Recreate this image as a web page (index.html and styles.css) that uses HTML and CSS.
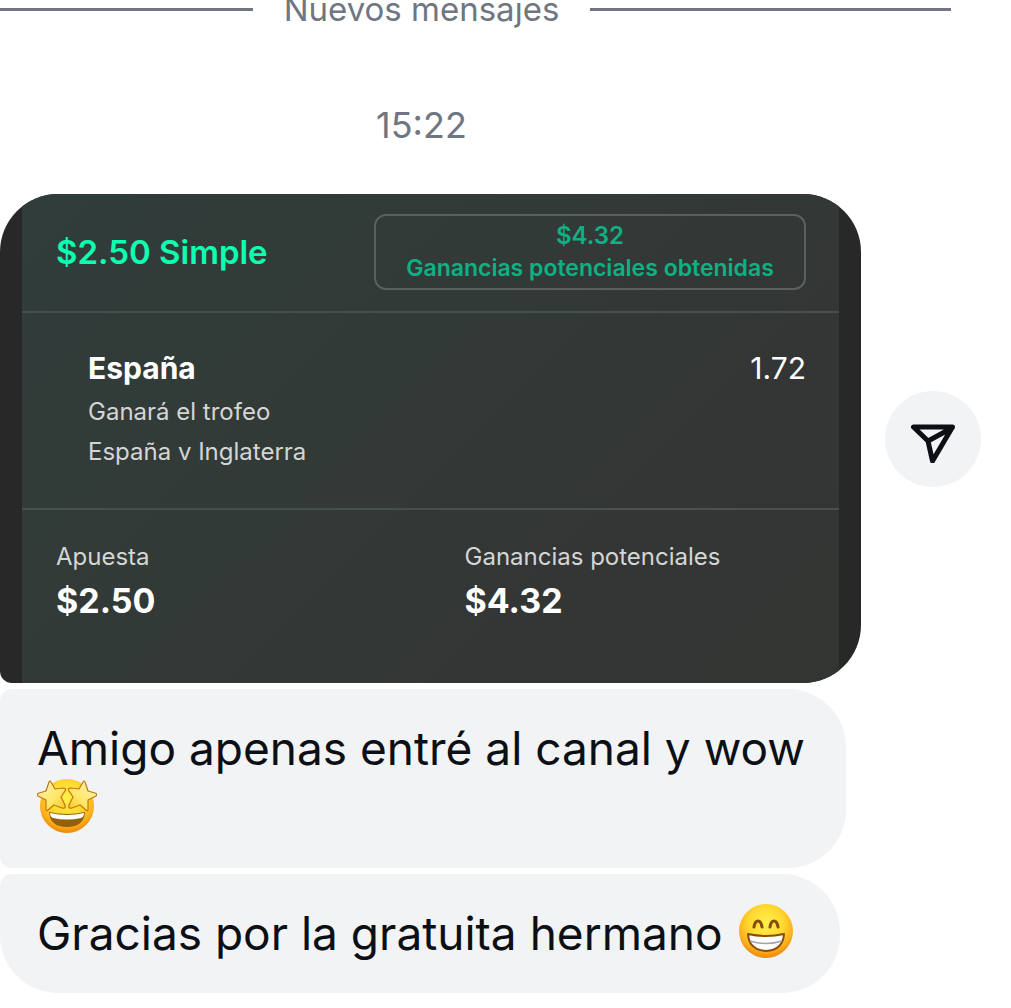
FILE: index.html
```html
<!DOCTYPE html>
<html lang="es">
<head>
  <meta charset="UTF-8">
  <meta name="viewport" content="width=device-width, initial-scale=1">
  <title>Mensajes</title>
  <link rel="stylesheet" href="styles.css">
</head>
<body>

  <main class="thread">
    <div class="divider"><span>Nuevos mensajes</span></div>
    <time class="time" datetime="15:22">15:22</time>

    <div class="message-row">
      <article class="photo">
        <div class="slip">
          <header class="slip-head">
            <h2>$2.50 Simple</h2>
            <div class="payout">
              <span class="payout-amount">$4.32</span>
              <span>Ganancias potenciales obtenidas</span>
            </div>
          </header>
          <section class="pick">
            <div>
              <h3>España</h3>
              <p>Ganará el trofeo</p>
              <p>España v Inglaterra</p>
            </div>
            <span class="odds">1.72</span>
          </section>
          <dl class="totals">
            <div>
              <dt>Apuesta</dt>
              <dd>$2.50</dd>
            </div>
            <div>
              <dt>Ganancias potenciales</dt>
              <dd>$4.32</dd>
            </div>
          </dl>
        </div>
      </article>
      <button class="share" type="button" aria-label="Compartir">
        <svg width="48" height="48" viewBox="0 0 48 48" fill="none" stroke="#0c1014" stroke-width="5" stroke-linejoin="round" stroke-linecap="round">
          <path d="M4.500 12H43.500L23.500 46L19 26ZM19 26L43 13"/>
        </svg>
      </button>
    </div>

    <p class="bubble">Amigo apenas entré al canal y wow
      <svg class="emoji" viewBox="0 0 60 60" role="img" aria-label="Ojos de estrella">
        <defs>
          <radialGradient id="face" cx="50%" cy="36%" r="64%">
            <stop offset="0" stop-color="#fff04c"/>
            <stop offset="0.500" stop-color="#ffd930"/>
            <stop offset="0.800" stop-color="#fcb01c"/>
            <stop offset="1" stop-color="#ea8609"/>
          </radialGradient>
          <linearGradient id="star" x1="0" y1="0" x2="1" y2="1">
            <stop offset="0" stop-color="#fff6bc"/>
            <stop offset="0.600" stop-color="#ffe768"/>
            <stop offset="1" stop-color="#f9c322"/>
          </linearGradient>
        </defs>
        <circle cx="30" cy="30" r="27" fill="url(#face)"/>
        <path d="M12 36Q30 40 48 36Q47 51 30 51Q13 51 12 36Z" fill="#94600a"/>
        <path d="M13 37Q30 41 47 37Q47 41 44 42Q30 45 16 42Q13 41 13 37Z" fill="#fff"/>
        <path id="eye" d="M12 6Q13 4 14 6L18 13L26 12Q30 12 28 15L24 21L28 29Q29 33 25 32L17 29L11 34Q9 36 9 33L9 24L1 20Q-1 18 2 17L9 15Z" fill="url(#star)" stroke="#c27810" stroke-width="1.200" stroke-linejoin="round"/>
        <use href="#eye" transform="matrix(-1 0 0 1 60 0)"/>
      </svg>
    </p>
    <p class="bubble bubble-last">Gracias por la gratuita hermano
      <svg class="emoji" viewBox="0 0 60 60" role="img" aria-label="Cara sonriente">
        <circle cx="30" cy="30" r="27" fill="url(#face)"/>
        <path d="M18 26Q19 20 22 20Q25 20 26 26M34 26Q35 20 38 20Q41 20 42 26" fill="none" stroke="#8a4b08" stroke-width="3" stroke-linecap="round"/>
        <path d="M12 33Q30 37 48 33Q47 49 30 50Q13 49 12 33Z" fill="#fff" stroke="#8a4b08" stroke-width="2" stroke-linejoin="round"/>
        <path d="M14 40Q30 45 46 40" fill="none" stroke="#a5a3a5" stroke-width="1.500"/>
      </svg>
    </p>
  </main>

</body>
</html>
```

FILE: styles.css
```css
* { box-sizing: border-box; }
body { margin: 0; background: #fff; color: #0c1014; font-family: Inter, "Liberation Sans", sans-serif; }
h2, h3, p, dl, dd { margin: 0; }

.thread { padding-right: 30px; overflow: hidden; }

/* the divider and time are centred on the full chat column, which runs off to the left */
.divider { display: flex; align-items: center; gap: 31px; margin: 0 30px 0 -108px; color: #6f7682; font-size: 33px; line-height: 18px; white-space: nowrap; }
.divider::before, .divider::after { content: ""; flex: 1; height: 3px; background: #6f7682; }
.time { display: block; margin: 87px 30px 49px -108px; color: #6f7682; font-size: 36px; line-height: 40px; text-align: center; }

.message-row { display: flex; align-items: center; gap: 24px; margin-bottom: 6px; }
.photo { flex: 1; padding: 0 22px; overflow: hidden; background: #282828; border-radius: 58px 58px 58px 12px; color: #fff; }
.slip { background: linear-gradient(135deg, #303d3b 0%, #323a37 40%, #333634 70%, #333533 100%); }
.slip-head { display: flex; align-items: center; justify-content: space-between; padding: 20px 33px 21px 34px; border-bottom: 2px solid #48504e; }
.slip-head h2 { color: #0effb0; font-size: 33px; line-height: 40px; font-weight: 600; }
.payout { display: flex; flex-direction: column; align-items: center; width: 432px; padding: 4px 0; border: 2px solid #59605e; border-radius: 12px; color: #0fb083; font-size: 23px; line-height: 32px; font-weight: 600; }
.payout-amount { font-size: 24px; }

.pick { display: flex; justify-content: space-between; padding: 33px 33px 36px 66px; border-bottom: 2px solid #48504e; }
.pick h3 { margin-bottom: 2px; font-size: 30px; line-height: 44px; font-weight: 700; }
.pick p { color: #d4d6d5; font-size: 24px; line-height: 40px; }
.odds { font-size: 30px; line-height: 44px; }

.totals { display: grid; grid-template-columns: 1fr 1fr; padding: 29px 0 56px; }
.totals div { padding-left: 34px; }
.totals dt { color: #d4d6d5; font-size: 24px; line-height: 36px; }
.totals dd { font-size: 34px; line-height: 52px; font-weight: 700; }

.share { display: flex; align-items: center; justify-content: center; width: 96px; height: 96px; padding: 0; border: 0; border-radius: 50%; background: #f2f3f5; }

.bubble { width: fit-content; max-width: 846px; margin-bottom: 6px; padding: 29px 38px 30px 37px; background: #f2f3f5; border-radius: 12px 58px 58px 12px; font-size: 46px; line-height: 60px; }
.bubble-last { border-bottom-left-radius: 58px; }
.emoji { width: 60px; height: 60px; margin: -12px 6px 0 0; vertical-align: middle; }
```
